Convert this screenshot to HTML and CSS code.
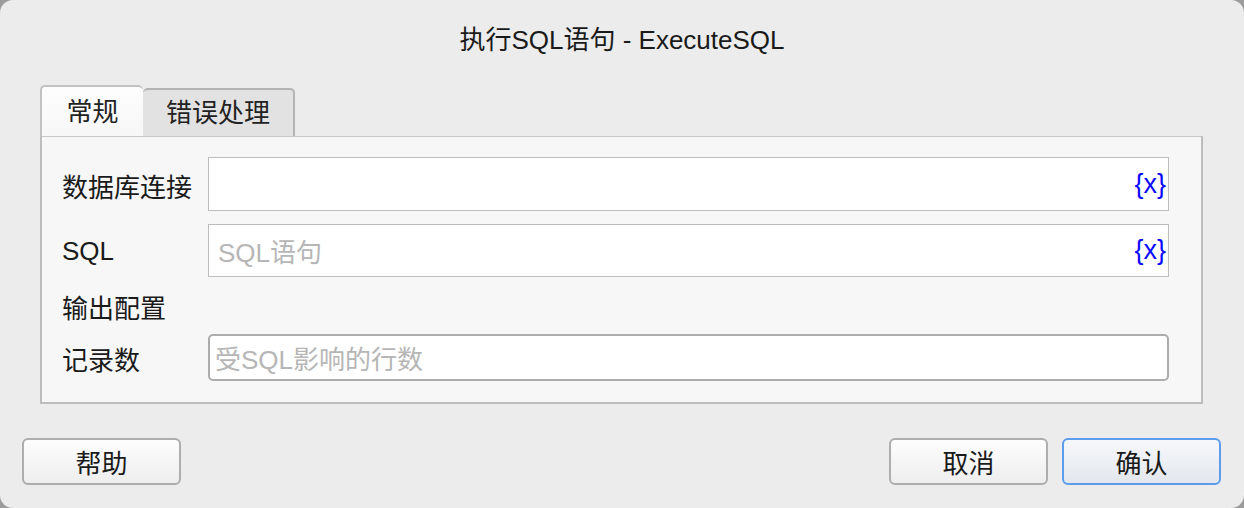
FILE: index.html
```html
<!DOCTYPE html>
<html lang="zh">
<head>
<meta charset="utf-8">
<title>执行SQL语句 - ExecuteSQL</title>
<link rel="stylesheet" href="styles.css">
</head>
<body>
<div class="dialog">
  <div class="title">执行SQL语句 - ExecuteSQL</div>
  <div class="tabs">
    <div class="tab active">常规</div>
    <div class="tab">错误处理</div>
  </div>
  <div class="panel">
    <div class="label">数据库连接</div>
    <div class="field"><span class="value"></span><span class="var">{x}</span></div>
    <div class="label">SQL</div>
    <div class="field"><span class="placeholder">SQL语句</span><span class="var">{x}</span></div>
    <div class="label section">输出配置</div>
    <div class="section-fill"></div>
    <div class="label">记录数</div>
    <div class="textfield"><span class="placeholder">受SQL影响的行数</span></div>
  </div>
  <div class="footer">
    <button class="btn">帮助</button>
    <div class="spacer"></div>
    <button class="btn">取消</button>
    <button class="btn primary">确认</button>
  </div>
</div>
</body>
</html>
```

FILE: styles.css
```css
html, body {
  margin: 0;
  padding: 0;
  background: #9c9c9c;
}
body {
  font-family: "Liberation Sans", "Noto Sans CJK SC", sans-serif;
  color: #1c1c1c;
}
.dialog {
  width: 1244px;
  height: 508px;
  background: #ececec;
  border-radius: 13px;
  overflow: hidden;
  display: flex;
  flex-direction: column;
}
.title {
  height: 80px;
  line-height: 80px;
  text-align: center;
  font-size: 26px;
  color: #1a1a1a;
  flex: none;
}
.tabs {
  margin-top: 5px;
  padding-left: 40px;
  display: flex;
  align-items: flex-end;
  height: 51px;
  flex: none;
}
.tab {
  box-sizing: border-box;
  height: 48px;
  width: 152px;
  border: 2px solid #b4b4b4;
  border-bottom: none;
  border-left: none;
  border-radius: 5px 5px 0 0;
  background: #e2e2e2;
  font-size: 26px;
  text-align: center;
  line-height: 46px;
  color: #222;
}
.tab.active {
  height: 51px;
  width: 103px;
  border-left: 2px solid #b9b9b9;
  border-right: none;
  background: linear-gradient(#fdfdfd, #f7f7f7);
  line-height: 50px;
  position: relative;
  z-index: 1;
  border-color: #c2c2c2;
}
.panel {
  box-sizing: border-box;
  margin: 0 41px 0 40px;
  height: 268px;
  border: 2px solid #bdbdbd;
  border-top: 1px solid #c8c8c8;
  background: #f7f7f7;
  padding: 20px 32px 21px 20px;
  display: grid;
  grid-template-columns: 146px 1fr;
  grid-template-rows: 54px 53px 31px 47px;
  row-gap: 13px;
  align-items: center;
  flex: none;
}
.label {
  font-size: 26px;
  color: #1a1a1a;
  padding-top: 2px;
}
.field {
  box-sizing: border-box;
  height: 100%;
  background: #fff;
  border: 1px solid #bcbcbc;
  display: flex;
  align-items: center;
  justify-content: space-between;
  padding: 0 2px 0 9px;
}
.var {
  color: #0a0aff;
  font-size: 27px;
  font-family: "Liberation Sans", sans-serif;
}
.placeholder {
  color: #b6b6b6;
  font-size: 26px;
}
.textfield {
  box-sizing: border-box;
  height: 100%;
  background: #fff;
  border: 2px solid #acacac;
  border-radius: 5px;
  display: flex;
  align-items: center;
  padding: 0 5px;
}
.footer {
  flex: 1;
  display: flex;
  align-items: flex-start;
  padding: 34px 23px 0 22px;
  gap: 14px;
}
.spacer {
  flex: 1;
}
.btn {
  box-sizing: border-box;
  width: 159px;
  height: 47px;
  border: 2px solid #adadad;
  border-radius: 6px;
  background: linear-gradient(#fdfdfd, #eeeeee);
  font-family: "Liberation Sans", "Noto Sans CJK SC", sans-serif;
  font-size: 26px;
  color: #1a1a1a;
  padding: 0;
}
.btn.primary {
  border-color: #5b9cec;
  background: linear-gradient(#f6f8fb, #e3e7ed);
}
```
